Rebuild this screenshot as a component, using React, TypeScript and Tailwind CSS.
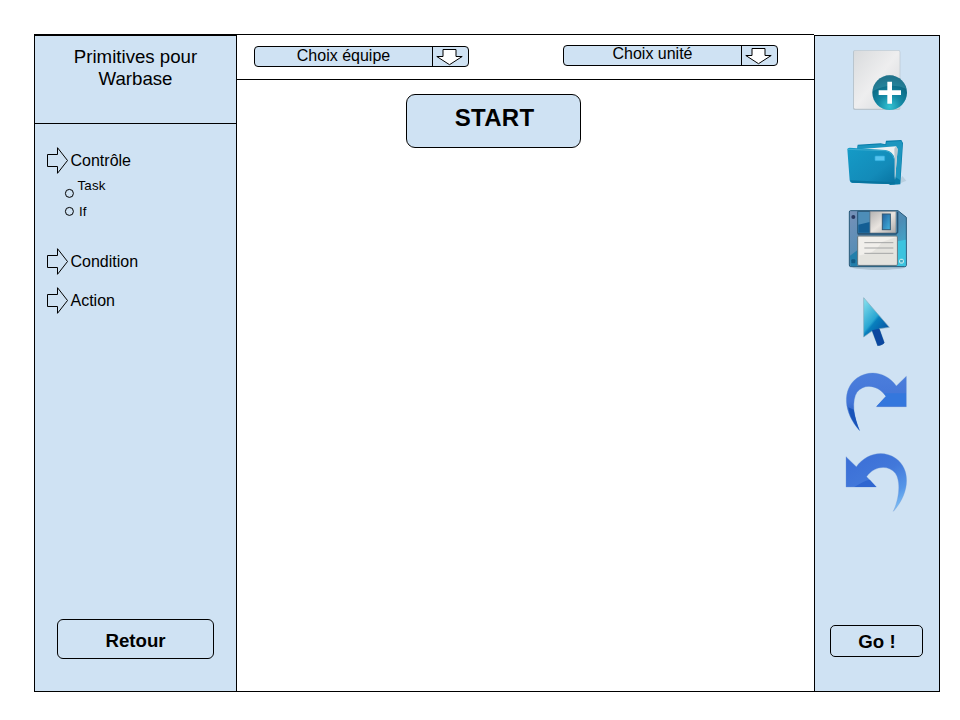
import React from "react";

function RightArrow() {
  return (
    <svg className="h-[27px] w-[22px] shrink-0" viewBox="0 0 22 27" fill="none" stroke="#000" strokeWidth="1">
      <path d="M.5 7.5H10.5V.7L20.5 13.5L10.5 26.3V19.5H.5Z" />
    </svg>
  );
}

function Primitive({ label, className }: { label: string; className: string }) {
  return (
    <div className={`flex h-[27px] items-center gap-[1.5px] pl-3 ${className}`}>
      <RightArrow />
      <span className="mt-px text-[16px] leading-[18px]">{label}</span>
    </div>
  );
}

function Bullet() {
  return (
    <svg className="h-[10px] w-[10px] shrink-0" viewBox="0 0 10 10" fill="none" stroke="#000">
      <circle cx="5.4" cy="5.4" r="4" />
    </svg>
  );
}

function Select({ label, className, labelClass }: { label: string; className: string; labelClass: string }) {
  return (
    <button className={`flex h-[21px] w-[215px] rounded-[4px] border border-black bg-[#cfe2f3] ${className}`}>
      <span className={`block w-[177px] text-center text-[16px] leading-[18px] ${labelClass}`}>{label}</span>
      <span className="flex h-[19px] flex-1 items-center justify-center border-l border-black">
        <svg className="h-[19px] w-[29px]" viewBox="0 0 29 19" fill="#fff" stroke="#000">
          <path d="M7 2.5H20V9.5H26.2L13.5 17.7L.8 9.5H7Z" />
        </svg>
      </span>
    </button>
  );
}

function NewFileIcon() {
  return (
    <svg className="h-[80px] w-[80px]" viewBox="0 0 240 240">
      <defs>
        <linearGradient id="page" x1="0" y1="0" x2="1" y2="1">
          <stop offset="0" stopColor="#d9dbdd" />
          <stop offset=".5" stopColor="#eeeeef" />
          <stop offset="1" stopColor="#d4d7da" />
        </linearGradient>
        <radialGradient id="plus" cx=".5" cy=".9" r=".85">
          <stop offset="0" stopColor="#35c3d3" />
          <stop offset=".4" stopColor="#1489a5" />
          <stop offset="1" stopColor="#075670" />
        </radialGradient>
      </defs>
      <rect x="39" y="31" width="142" height="179" rx="5" fill="#b9c5ce" />
      <rect x="42" y="32" width="137" height="174" rx="4" fill="url(#page)" />
      <circle cx="149" cy="158" r="52" fill="url(#plus)" />
      <path d="M98 154a51 51 0 0 1 101-7q-45-22-101 7Z" fill="#51a8bd" opacity=".35" />
      <path d="M142 125h14v26h27v14h-27v26h-14v-26h-26v-14h26Z" fill="#fff" />
    </svg>
  );
}

function FolderIcon() {
  return (
    <svg className="mt-[10px] h-[65px] w-[80px]" viewBox="0 0 240 195">
      <defs>
        <linearGradient id="folder" x1="0" y1="0" x2="1" y2="1">
          <stop offset="0" stopColor="#159bc7" />
          <stop offset=".65" stopColor="#138bb9" />
          <stop offset="1" stopColor="#0873a1" />
        </linearGradient>
      </defs>
      <path d="M170 164L199 152L187 138Z" fill="#87a3b2" opacity=".3" />
      <path d="M53 44L122 40L136 43L138 32L184 30L189 39L181 163L150 165L51 62Z" fill="#087ca9" />
      <path d="M53 47L125 43L138 46L140 36L184 33L187 42L180 150L53 67Z" fill="#1d96bf" />
      <path d="M56 58L168 49L173 57L165 150L145 70Z" fill="#edf1f3" />
      <path d="M163 56L168 49L173 57L165 150Z" fill="#bac7cf" />
      <path d="M22 58Q22 53 29 53L136 60Q160 64 164 87V163L35 158Q30 158 29 151Z" fill="url(#folder)" />
      <path d="M23 58L136 62Q157 66 162 86" fill="none" stroke="#4eb6d6" strokeWidth="2" />
      <path d="M30 151L36 158L163 163L165 157Z" fill="#08749f" />
      <rect x="105" y="78" width="29" height="14" rx="2" fill="#58c4ef" stroke="#2eaede" strokeWidth="2" />
    </svg>
  );
}

function FloppyIcon() {
  return (
    <svg className="mt-[5px] h-[80px] w-[80px]" viewBox="0 0 240 240">
      <defs>
        <linearGradient id="disk" x1="0" y1="0" x2="1" y2="1">
          <stop offset="0" stopColor="#7891b8" />
          <stop offset=".55" stopColor="#4c8cb5" />
          <stop offset="1" stopColor="#37bfdd" />
        </linearGradient>
        <linearGradient id="shutter" x1="0" y1="0" x2="1" y2="1">
          <stop offset="0" stopColor="#b3b2b1" />
          <stop offset=".5" stopColor="#e9e4df" />
          <stop offset="1" stopColor="#aaa9a9" />
        </linearGradient>
        <linearGradient id="slot" x1="0" y1="0" x2="1" y2="1">
          <stop offset="0" stopColor="#235f9c" />
          <stop offset="1" stopColor="#43b5e0" />
        </linearGradient>
      </defs>
      <ellipse cx="116" cy="201" rx="80" ry="9" fill="#8fa8b8" opacity=".5" />
      <path d="M31 32H174L199 52V196Q199 200 194 200H32Q28 200 28 195V36Q28 32 31 32Z" fill="url(#disk)" stroke="#275878" strokeWidth="3" />
      <path d="M30 167L52 151V199H32Z" fill="#237fab" />
      <path d="M172 124L197 119V198H172Z" fill="#3bc4df" />
      <path d="M53 34H91V100H53Z" fill="#4d8db8" stroke="#285777" strokeWidth="3" />
      <path d="M55 74L89 66V98H55Z" fill="#135e94" />
      <path d="M90 34H168V99H90Z" fill="url(#shutter)" stroke="#687784" strokeWidth="2" />
      <rect x="127" y="42" width="24" height="47" fill="url(#slot)" stroke="#315976" strokeWidth="3" />
      <path d="M53 102H168L173 97V35" fill="none" stroke="#285373" strokeWidth="4" />
      <rect x="53" y="108" width="119" height="88" rx="3" fill="#f1efeb" stroke="#63727a" strokeWidth="3" />
      <path d="M58 166Q103 164 126 126L169 111V193H58Z" fill="#dcdad6" opacity=".6" />
      <path d="M73 128H160M73 144H160M73 160H160" stroke="#a4a5a5" strokeWidth="3" />
      <circle cx="40" cy="51" r="6" fill="#293860" />
      <rect x="34" y="178" width="12" height="12" rx="3" fill="#145b84" />
      <rect x="179" y="178" width="11" height="11" rx="3" fill="#43a4be" stroke="#d8f5f5" strokeWidth="3" />
    </svg>
  );
}

function CursorIcon() {
  return (
    <svg className="mt-[5px] h-[75px] w-[80px]" viewBox="-30 0 240 225">
      <defs>
        <linearGradient id="cursor" x1="0" y1="0" x2=".65" y2="1">
          <stop offset="0" stopColor="#8ce4ef" />
          <stop offset=".5" stopColor="#29a6d2" />
          <stop offset=".56" stopColor="#087fbd" />
          <stop offset="1" stopColor="#08479c" />
        </linearGradient>
      </defs>
      <path d="M41 38L118 127L88 131L103 173Q97 181 83 182L66 138L41 156Z" fill="url(#cursor)" stroke="#83aabd" strokeWidth="2" />
      <path d="M66 136L88 131L103 173Q97 181 83 182Z" fill="#0b479f" />
    </svg>
  );
}

function RedoIcon() {
  return (
    <svg className="mt-[5px] h-[75px] w-[80px]" viewBox="15 0 240 225">
      <defs>
        <linearGradient id="redo" x1="0" y1="0" x2="0" y2="1">
          <stop offset="0" stopColor="#4c7edc" />
          <stop offset=".5" stopColor="#4375d7" />
          <stop offset=".8" stopColor="#245bbe" />
          <stop offset="1" stopColor="#4f8ce0" />
        </linearGradient>
      </defs>
      <path d="M74 197C25 143 20 73 66 39C108 11 157 25 184 63L214 34V125H124L153 94C131 61 88 53 66 82C50 105 55 158 74 197Z" fill="url(#redo)" stroke="#5e8bd1" strokeWidth="1" />
      <path d="M146 85H213V124H125L153 94Z" fill="#3477dd" />
      <path d="M40 127L56 134Q61 162 74 197Q46 165 40 127Z" fill="#1954b9" />
    </svg>
  );
}

function UndoIcon() {
  return (
    <svg className="mt-[5px] h-[75px] w-[80px]" viewBox="15 240 240 225">
      <defs>
        <linearGradient id="undo" gradientUnits="userSpaceOnUse" x1="80" y1="270" x2="180" y2="439">
          <stop offset="0" stopColor="#3c70d7" />
          <stop offset=".4" stopColor="#4278da" />
          <stop offset=".75" stopColor="#5596e8" />
          <stop offset="1" stopColor="#7fc2f6" />
        </linearGradient>
      </defs>
      <path d="M175 439C223 386 230 314 182 280C141 252 91 268 64 305L33 275V366H124L95 335C117 303 160 298 181 325C198 349 193 401 175 439Z" fill="url(#undo)" stroke="#7099d5" strokeWidth="1" />
      <path d="M58 366Q88 347 104 344L124 366Z" fill="#2f66d0" />
    </svg>
  );
}

export default function App() {
  return (
    <div className="h-[720px] w-[960px] overflow-hidden bg-white pl-[34px] pt-[34px] font-['Liberation_Sans',Arial,sans-serif] text-black">
      <div className="flex h-[658px] w-[906px]">
        <aside className="flex w-[203px] shrink-0 flex-col border border-t-2 border-black bg-[#cfe2f3]">
          <header className="h-[88px] border-b border-black pt-[10px] text-center text-[18.67px] leading-[22px]">
            Primitives pour
            <br />
            Warbase
          </header>
          <nav className="flex flex-1 flex-col">
            <Primitive label="Contrôle" className="mt-[23px]" />
            <div className="mt-[3px] flex h-[22px] items-start pl-[29px] text-[13.33px] leading-[16px]">
              <span className="mt-[11px] flex">
                <Bullet />
              </span>
              <span className="ml-[3.5px] mt-px tracking-[0.2px]">Task</span>
            </div>
            <div className="mt-[4px] flex h-[16px] items-center gap-[5px] pl-[29px] text-[13.33px] leading-[16px]">
              <Bullet />
              <span className="mt-px">If</span>
            </div>
            <Primitive label="Condition" className="mt-[29px]" />
            <Primitive label="Action" className="mt-[12px]" />
          </nav>
          <button className="mb-[32px] ml-[22px] h-[40px] w-[157px] rounded-[6px] border border-black pt-[3px] text-[18.67px] font-bold">
            Retour
          </button>
        </aside>
        <main className="flex w-[577px] shrink-0 flex-col items-start border-y border-black bg-white">
          <div className="flex h-[45px] w-full items-start border-b border-black pl-[17px]">
            <Select label="Choix équipe" className="mt-[11px]" labelClass="" />
            <Select label="Choix unité" className="ml-[94px] mt-[10px]" labelClass="-mt-px" />
          </div>
          <button className="ml-[169px] mt-[14px] h-[54px] w-[175px] rounded-[9px] border border-black bg-[#cfe2f3] pb-[6px] pl-[2px] text-[24px] font-bold tracking-[0.3px]">
            START
          </button>
        </main>
        <aside className="mt-px flex w-[126px] shrink-0 flex-col border border-black bg-[#cfe2f3]">
          <div className="ml-[25px] mt-[4px] flex w-[80px] flex-1 flex-col">
            <NewFileIcon />
            <FolderIcon />
            <FloppyIcon />
            <CursorIcon />
            <RedoIcon />
            <UndoIcon />
          </div>
          <button className="mb-[34px] ml-[15px] h-[32px] w-[93px] rounded-[5px] border border-black pl-px pt-[2px] text-[18.67px] font-bold">
            Go !
          </button>
        </aside>
      </div>
    </div>
  );
}
